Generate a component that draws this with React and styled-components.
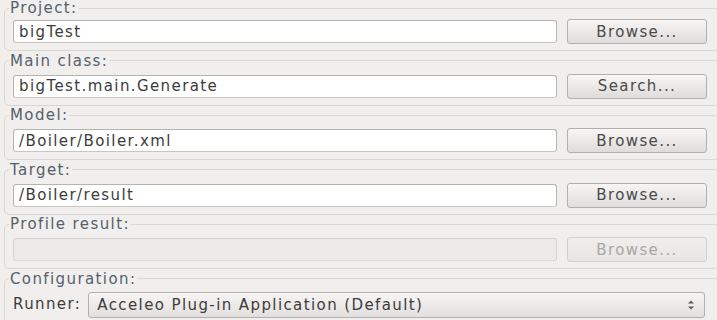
import React from 'react'
import styled, { createGlobalStyle } from 'styled-components'

const GlobalStyle = createGlobalStyle`
  html, body {
    margin: 0;
    padding: 0;
    background: #f0efed;
    overflow: hidden;
  }
`

const Screen = styled.div`
  width: 717px;
  height: 320px;
  overflow: hidden;
  background: #f0efed;
  font-family: "DejaVu Sans", "Liberation Sans", sans-serif;
  font-size: 15px;
  letter-spacing: 1.4px;
  color: #3c3c3c;
`

const Panel = styled.div`
  width: 715px;
  padding: 1px 0 0 4px;
  display: flex;
  flex-direction: column;
  gap: 1.6px;
`

const Group = styled.fieldset`
  margin: 0;
  padding: ${p => (p.$first ? '4px' : '5px')} 11px 6px 8px;
  border: 1px solid #d9d7d4;
  border-radius: 5px;
  min-width: 0;

  legend {
    margin-left: -4px;
    padding: 0 1px;
    line-height: ${p => (p.$first ? '14px' : '16px')};
    color: #56606c;
  }
`

const Row = styled.div`
  display: flex;
  align-items: center;
  gap: 10px;
  height: 25px;
`

const TextField = styled.div`
  flex: 1;
  height: 23px;
  box-sizing: border-box;
  display: flex;
  align-items: center;
  padding-left: 5px;
  border: 1px solid ${p => (p.disabled ? '#d6d3cf' : '#b7b3ae')};
  border-bottom-color: ${p => (p.disabled ? '#dcd9d5' : '#c9c6c2')};
  border-radius: 3px;
  background: ${p => (p.disabled ? '#eceae8' : '#ffffff')};
  white-space: nowrap;
  overflow: hidden;
`

const Button = styled.button`
  width: 140px;
  height: 25px;
  flex-shrink: 0;
  padding: 0;
  font: inherit;
  letter-spacing: inherit;
  border: 1px solid ${p => (p.disabled ? '#d3d0cc' : '#b3afaa')};
  border-radius: 3px;
  color: ${p => (p.disabled ? '#aaa7a3' : '#4a4a4a')};
  background: ${p =>
    p.disabled
      ? 'linear-gradient(#efeeec, #e8e6e4)'
      : 'linear-gradient(#f7f6f5, #dfdcda)'};
`

const RunnerLabel = styled.span`
  margin-right: -3px;
  color: #3c3c3c;
`

const Combo = styled.div`
  flex: 1;
  height: 26px;
  margin-top: 1px;
  margin-right: 2px;
  box-sizing: border-box;
  display: flex;
  align-items: center;
  justify-content: space-between;
  padding: 0 9px 0 8px;
  border: 1px solid #b3afaa;
  border-radius: 3px;
  background: linear-gradient(#f6f5f4, #e2e0de);
  white-space: nowrap;
`

const Spinner = () => (
  <svg width="8" height="12" viewBox="0 0 8 12">
    <path d="M1 4.5 L4 1.5 L7 4.5 Z" fill="#5a5a5a" />
    <path d="M1 7.5 L4 10.5 L7 7.5 Z" fill="#5a5a5a" />
  </svg>
)

const FieldGroup = ({ label, value, action, disabled, first }) => (
  <Group $first={first}>
    <legend>{label}</legend>
    <Row>
      <TextField disabled={disabled}>{value}</TextField>
      <Button disabled={disabled}>{action}</Button>
    </Row>
  </Group>
)

const fields = [
  { label: 'Project:', value: 'bigTest', action: 'Browse...', first: true },
  { label: 'Main class:', value: 'bigTest.main.Generate', action: 'Search...' },
  { label: 'Model:', value: '/Boiler/Boiler.xml', action: 'Browse...' },
  { label: 'Target:', value: '/Boiler/result', action: 'Browse...' },
  { label: 'Profile result:', value: '', action: 'Browse...', disabled: true },
]

export default function App() {
  return (
    <Screen>
      <GlobalStyle />
      <Panel>
        {fields.map(f => (
          <FieldGroup key={f.label} {...f} />
        ))}
        <Group>
          <legend>Configuration:</legend>
          <Row>
            <RunnerLabel>Runner:</RunnerLabel>
            <Combo>
              <span>Acceleo Plug-in Application (Default)</span>
              <Spinner />
            </Combo>
          </Row>
        </Group>
      </Panel>
    </Screen>
  )
}
